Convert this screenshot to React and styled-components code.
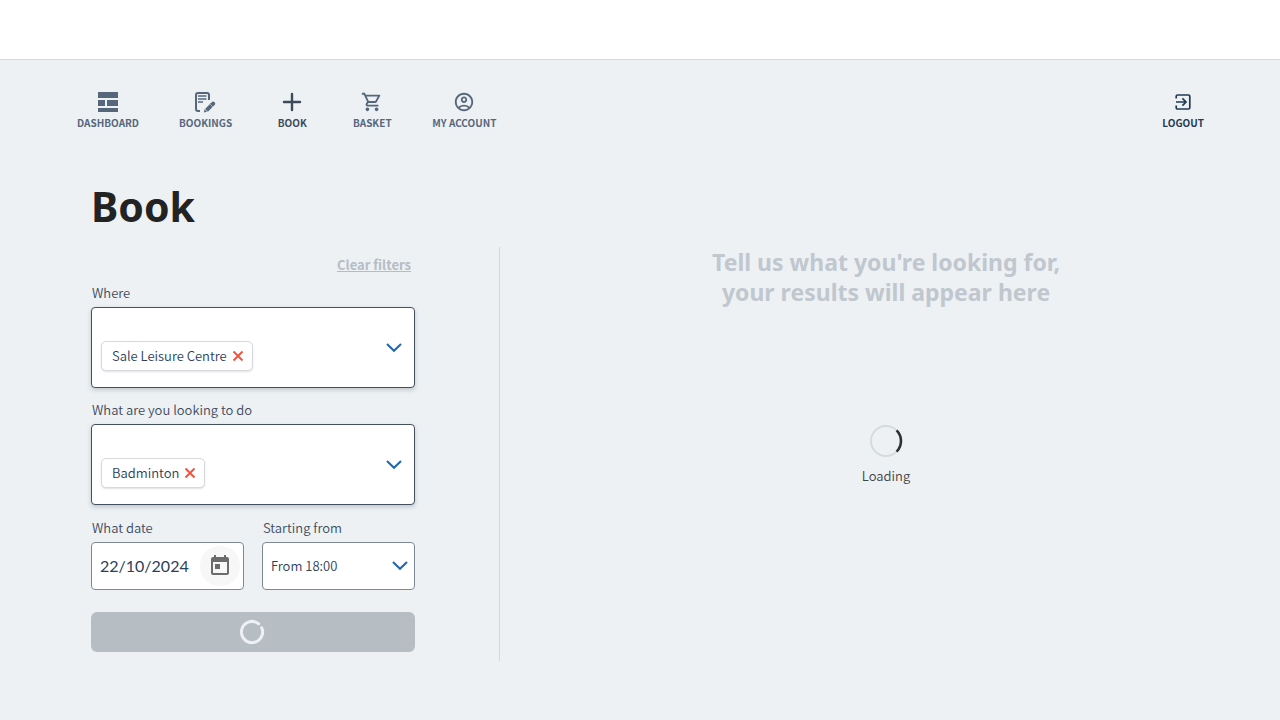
import React from "react";
import styled, { createGlobalStyle } from "styled-components";
import { MdOutlineShoppingCart, MdOutlineAccountCircle, MdToday } from "react-icons/md";

const GlobalStyle = createGlobalStyle`
  *, *::before, *::after { box-sizing: border-box; }
  body {
    margin: 0;
    min-height: 100vh;
    background: #edf1f4;
    color: #2d4058;
    font-family: "Noto Sans CJK SC", "Noto Sans", sans-serif;
    font-size: 13px;
    font-weight: 350;
    line-height: 20px;
  }
  button, input, select { font: inherit; color: inherit; }
`;

const Banner = styled.header`
  height: 60px;
  background: #ffffff;
  border-bottom: 1px solid #d8dcdf;
`;

const Nav = styled.nav`
  display: flex;
  justify-content: space-between;
  padding: 30px 56px 0 57px;
`;

const NavList = styled.ul`
  display: flex;
  margin: 0;
  padding: 0;
  list-style: none;
`;

const NavLink = styled.a`
  display: flex;
  flex-direction: column;
  align-items: center;
  min-width: 80px;
  padding: 0 20px;
  color: ${(p) => p.$color || "#56677c"};
  font-size: 10px;
  font-weight: 700;
  line-height: 18px;
  text-decoration: none;
  text-transform: uppercase;

  svg { height: 24px; }
`;

const Page = styled.main`
  padding: 46px 8px 59px 91px;
`;

const Title = styled.h1`
  margin: 0 0 13px;
  color: #232323;
  font-family: "Noto Sans", sans-serif;
  font-size: 41px;
  font-weight: 700;
  line-height: 56px;
`;

const Columns = styled.div`
  display: grid;
  grid-template-columns: 408px minmax(0, 1fr);
`;

const Filters = styled.form`
  display: flex;
  flex-direction: column;
  margin-right: 84px;
  padding: 8px 0 9px;
`;

const ClearButton = styled.button`
  align-self: flex-end;
  margin: 0 4px 8px 0;
  padding: 0;
  border: 0;
  background: none;
  color: #b5bcc4;
  font-weight: 700;
  text-decoration: underline;
  text-underline-offset: 1px;
`;

const Field = styled.div`
  display: flex;
  flex-direction: column;
  min-width: 0;
  margin-bottom: 12px;
`;

const Label = styled.label`
  height: 24px;
  padding-left: 1px;
  color: #3e4c60;
`;

const MultiSelect = styled.div`
  display: flex;
  align-items: center;
  height: 81px;
  padding: 0 12px 0 9px;
  background: #ffffff;
  border: 1px solid #435060;
  border-radius: 4px;
  box-shadow: 0 2px 4px rgba(60, 75, 90, 0.25);
`;

const Selection = styled.div`
  flex: 1;
  min-width: 0;
`;

const SearchInput = styled.input`
  display: block;
  width: 100%;
  height: 16px;
  padding: 0;
  border: 0;
  outline: 0;
  background: transparent;
`;

const Chip = styled.span`
  display: inline-flex;
  align-items: center;
  gap: 5px;
  height: 30px;
  padding: 0 8px 0 10px;
  background: #ffffff;
  border: 1px solid #d6d9dd;
  border-radius: 5px;
  box-shadow: 0 1px 2px rgba(0, 0, 0, 0.12);
`;

const IconButton = styled.button`
  display: flex;
  align-items: center;
  justify-content: center;
  padding: 0;
  border: 0;
  background: none;
  color: ${(p) => p.$color};
`;

const FieldRow = styled.div`
  display: grid;
  grid-template-columns: repeat(2, minmax(0, 1fr));
  gap: 18px;
  margin: 1px 0 10px;
`;

const Control = styled.div`
  display: flex;
  align-items: center;
  height: 48px;
  background: #ffffff;
  border: 1px solid #7d8998;
  border-radius: 4px;
`;

const DateInput = styled.input`
  flex: 1;
  min-width: 0;
  padding: 0 0 0 8px;
  border: 0;
  outline: 0;
  background: transparent;
  font-family: "Lato", sans-serif;
  font-size: 16px;
  font-weight: 400;
`;

const CalendarButton = styled.button`
  display: flex;
  align-items: center;
  justify-content: center;
  width: 40px;
  height: 40px;
  margin-right: 3px;
  padding: 0;
  border: 0;
  border-radius: 50%;
  background: #f7f7f7;
  color: #6b6b6b;
`;

const SelectShell = styled.div`
  display: grid;
  align-items: center;

  > * { grid-area: 1 / 1; }
  > svg {
    justify-self: end;
    margin-right: 7px;
    color: #1f66ae;
    pointer-events: none;
  }
`;

const Select = styled.select`
  width: 100%;
  height: 48px;
  padding: 0 32px 0 8px;
  appearance: none;
  background: #ffffff;
  border: 1px solid #7d8998;
  border-radius: 4px;
`;

const SearchButton = styled.button`
  display: flex;
  align-items: center;
  justify-content: center;
  height: 40px;
  padding: 0 2px 0 0;
  border: 0;
  border-radius: 6px;
  background: #b6bdc3;
`;

const Results = styled.section`
  display: flex;
  flex-direction: column;
  align-items: center;
  border-left: 1px solid #d3d8dc;
`;

const Prompt = styled.h2`
  max-width: 372px;
  margin: 0 0 117px;
  color: #c0c7ce;
  font-family: "Noto Sans", sans-serif;
  font-size: 23px;
  font-weight: 700;
  line-height: 30px;
  text-align: center;
`;

const Loading = styled.div`
  display: flex;
  flex-direction: column;
  align-items: center;
  gap: 8px;
  color: #454545;
`;

const DashboardIcon = () => (
  <svg width="20" height="24" viewBox="0 0 20 24" fill="currentColor" aria-hidden="true">
    <path d="M0 2h20v6H0zM0 10h7v6H0zM9 10h11v6H9zM0 18h20v4H0z" />
  </svg>
);

const BookingsIcon = () => (
  <svg width="20" height="24" viewBox="2 0 20 24" overflow="visible" fill="none" stroke="currentColor" strokeWidth="2" aria-hidden="true">
    <path d="M6 21H4a2 2 0 0 1-2-2V5a2 2 0 0 1 2-2h9a2 2 0 0 1 2 2v5" />
    <path d="M4 6h8.500M4 9h8.500M4 12h5" strokeWidth="1.700" />
    <path d="M12.500 20.300 18.600 14.200" strokeWidth="4" />
    <path d="m18.400 14.400.8-.8" strokeWidth="4" strokeLinecap="round" />
    <path d="m10.400 19.200 2.600 2.600-3 .7z" fill="currentColor" stroke="none" />
    <path d="m16.200 14.200 2.800 2.800" stroke="#edf1f4" strokeWidth=".6" />
  </svg>
);

const PlusIcon = () => (
  <svg width="20" height="24" viewBox="0 0 20 24" fill="none" stroke="currentColor" strokeWidth="2.400" strokeLinecap="round" aria-hidden="true">
    <path d="M10 4v16M2 12h16" />
  </svg>
);

const LogoutIcon = () => (
  <svg width="16" height="24" viewBox="0 0 16 24" fill="none" stroke="currentColor" strokeWidth="1.700" aria-hidden="true">
    <path d="M1.200 8.600V6.300A1.300 1.300 0 0 1 2.500 5h11A1.300 1.300 0 0 1 14.800 6.300v11.400a1.300 1.300 0 0 1-1.300 1.300h-11a1.300 1.300 0 0 1-1.300-1.300v-2.300" />
    <path d="M1 12h9M7.400 8.400 11 12l-3.600 3.600" />
  </svg>
);

const Chevron = () => (
  <svg width="16" height="10" viewBox="0 0 16 10" fill="none" stroke="currentColor" strokeWidth="2" aria-hidden="true">
    <path d="M1 1 8 7.800l7-6.800" />
  </svg>
);

const CrossIcon = () => (
  <svg width="12" height="12" viewBox="0 0 12 12" fill="none" stroke="currentColor" strokeWidth="1.800" aria-hidden="true">
    <path d="m1.500 1.500 9 9M10.500 1.500l-9 9" />
  </svg>
);

const ButtonSpinner = () => (
  <svg width="26" height="26" viewBox="0 0 26 26" fill="none" stroke="#eef1f3" strokeWidth="3" strokeLinecap="round" aria-hidden="true">
    <path d="M22.700 8.700A10.600 10.600 0 1 1 19.700 4.800" />
  </svg>
);

const PageSpinner = () => (
  <svg width="34" height="34" viewBox="0 0 34 34" fill="none" aria-hidden="true">
    <circle cx="17" cy="17" r="15" stroke="#d5dadc" strokeWidth="2" />
    <path d="M27.600 6.400a15 15 0 0 1 0 21.200" stroke="#2e3133" strokeWidth="2.600" />
  </svg>
);

const NAV_ITEMS = [
  { label: "Dashboard", icon: <DashboardIcon /> },
  { label: "Bookings", icon: <BookingsIcon /> },
  { label: "Book", icon: <PlusIcon />, color: "#3c4a5a" },
  { label: "Basket", icon: <MdOutlineShoppingCart size={22} /> },
  { label: "My account", icon: <MdOutlineAccountCircle size={22} /> },
];

function ChipField({ id, label, value }) {
  return (
    <Field>
      <Label htmlFor={id}>{label}</Label>
      <MultiSelect>
        <Selection>
          <SearchInput id={id} type="text" role="combobox" aria-expanded="false" />
          <Chip>
            {value}
            <IconButton type="button" $color="#f0503c" aria-label={`Remove ${value}`}>
              <CrossIcon />
            </IconButton>
          </Chip>
        </Selection>
        <IconButton type="button" $color="#1f66ae" aria-label={`Show options: ${label}`}>
          <Chevron />
        </IconButton>
      </MultiSelect>
    </Field>
  );
}

export default function App() {
  return (
    <>
      <GlobalStyle />
      <Banner />
      <Nav>
        <NavList>
          {NAV_ITEMS.map((item) => (
            <li key={item.label}>
              <NavLink href="#" $color={item.color}>
                {item.icon}
                {item.label}
              </NavLink>
            </li>
          ))}
        </NavList>
        <NavLink href="#" $color="#233a54">
          <LogoutIcon />
          Logout
        </NavLink>
      </Nav>
      <Page>
        <Title>Book</Title>
        <Columns>
          <Filters>
            <ClearButton type="button">Clear filters</ClearButton>
            <ChipField id="where" label="Where" value="Sale Leisure Centre" />
            <ChipField id="activity" label="What are you looking to do" value="Badminton" />
            <FieldRow>
              <Field>
                <Label htmlFor="date">What date</Label>
                <Control>
                  <DateInput id="date" type="text" defaultValue="22/10/2024" />
                  <CalendarButton type="button" aria-label="Choose date">
                    <MdToday size={24} />
                  </CalendarButton>
                </Control>
              </Field>
              <Field>
                <Label htmlFor="time">Starting from</Label>
                <SelectShell>
                  <Select id="time">
                    <option>From 18:00</option>
                  </Select>
                  <Chevron />
                </SelectShell>
              </Field>
            </FieldRow>
            <SearchButton type="submit" aria-label="Searching">
              <ButtonSpinner />
            </SearchButton>
          </Filters>
          <Results>
            <Prompt>Tell us what you're looking for, your results will appear here</Prompt>
            <Loading role="status">
              <PageSpinner />
              Loading
            </Loading>
          </Results>
        </Columns>
      </Page>
    </>
  );
}
